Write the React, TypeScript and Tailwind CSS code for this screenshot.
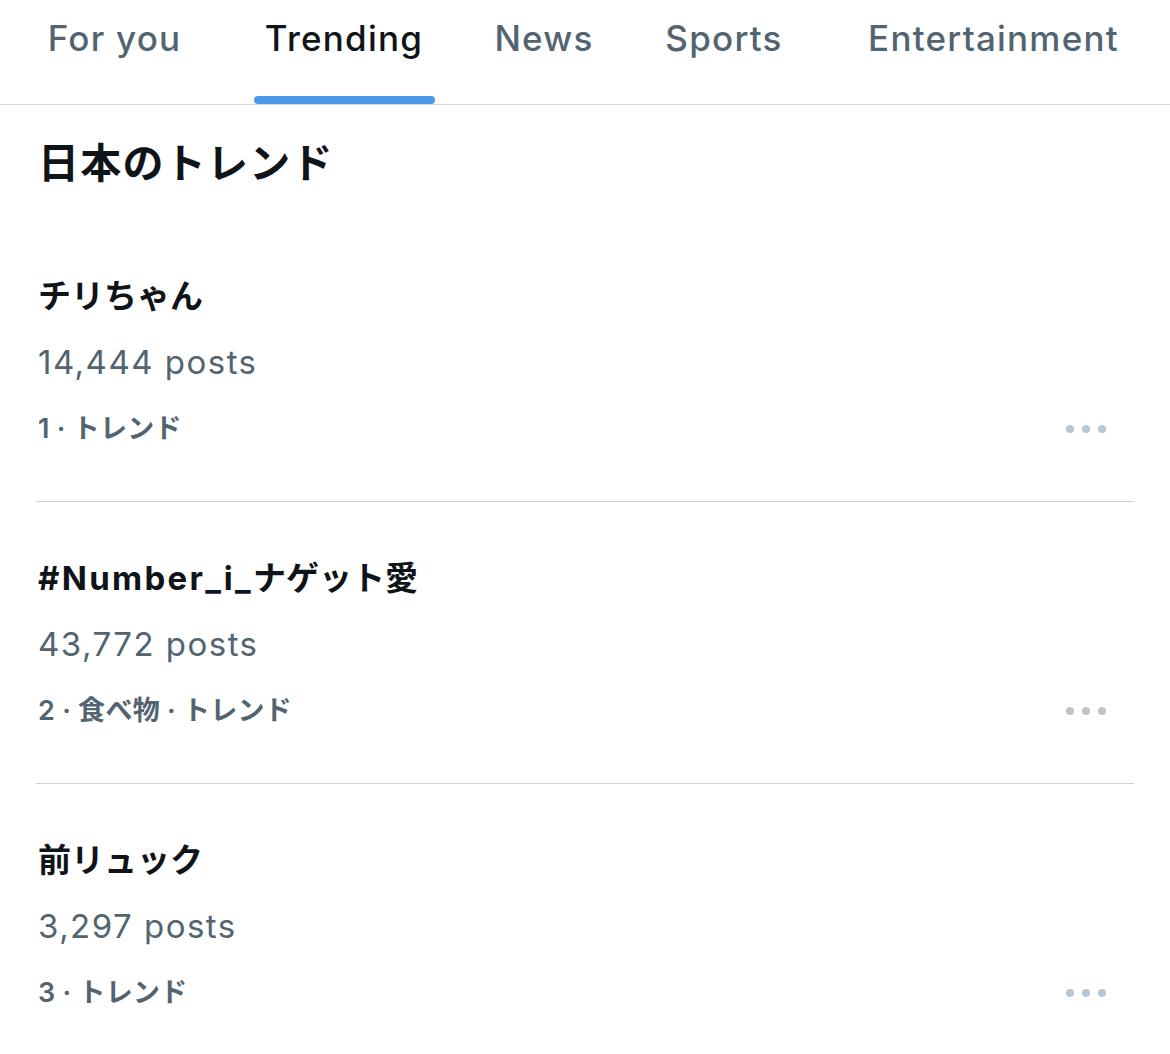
const tabs = [
  { label: 'For you', width: 'w-[229px]' },
  { label: 'Trending', width: 'w-[230px]', active: true },
  { label: 'News', width: 'w-[170px]' },
  { label: 'Sports', width: 'w-[190px]' },
  { label: 'Entertainment', width: 'w-[349px]' },
]

const trends = [
  { title: 'チリちゃん', posts: '14,444 posts', meta: '1 · トレンド' },
  { title: '#Number_i_ナゲット愛', posts: '43,772 posts', meta: '2 · 食べ物 · トレンド' },
  { title: '前リュック', posts: '3,297 posts', meta: '3 · トレンド' },
]

function MoreDots() {
  return (
    <div className="flex items-center gap-[8px] mr-[28px]">
      <span className="w-[8px] h-[8px] rounded-full bg-[#b9c7d3]" />
      <span className="w-[8px] h-[8px] rounded-full bg-[#b9c7d3]" />
      <span className="w-[8px] h-[8px] rounded-full bg-[#b9c7d3]" />
    </div>
  )
}

// latin runs get a little extra tracking, CJK keeps its natural width
function Title({ text }: { text: string }) {
  const parts = text.split(/([A-Za-z0-9#_]+)/).filter(Boolean)
  return (
    <p className="text-[33px] leading-[40px] font-bold text-[#0f1419]">
      {parts.map((p, i) =>
        /[A-Za-z0-9#_]/.test(p) ? (
          <span key={i} className="tracking-[0.07em]">{p}</span>
        ) : (
          <span key={i}>{p}</span>
        )
      )}
    </p>
  )
}

export default function App() {
  return (
    <div
      className="w-[1170px] h-[1054px] bg-white overflow-hidden"
      style={{ fontFamily: 'Inter, "Noto Sans CJK JP", sans-serif' }}
    >
      {/* Tabs */}
      <div className="flex h-[105px] border-b border-[#cfd9de]">
        {tabs.map((tab) => (
          <div key={tab.label} className={`${tab.width} flex flex-col items-center justify-between`}>
            <span
              className={`pt-[16px] text-[35px] leading-[44px] font-medium tracking-[0.035em] ${
                tab.active ? 'text-[#0f1419]' : 'text-[#536471]'
              }`}
            >
              {tab.label}
            </span>
            {tab.active ? (
              <span className="w-[181px] h-[8px] rounded-full bg-[#4a99e9]" />
            ) : (
              <span className="h-[8px]" />
            )}
          </div>
        ))}
      </div>

      {/* Heading */}
      <h1 className="mt-[34px] mb-[33px] ml-[38px] text-[41px] leading-[48px] font-bold tracking-[0.03em] text-[#0f1419]">
        日本のトレンド
      </h1>

      {/* Trend list */}
      <div className="mx-[36px]">
        {trends.map((t) => (
          <div key={t.title} className="pt-[56px] pb-[55px] pl-[2px] border-b border-[#cfcfcf]">
            <Title text={t.title} />
            <p className="mt-[26px] text-[33px] leading-[40px] tracking-[0.045em] text-[#536471]">{t.posts}</p>
            <div className="mt-[30px] flex items-center justify-between">
              <span className="text-[27px] leading-[34px] font-semibold tracking-[0.01em] text-[#536471]">
                {t.meta}
              </span>
              <MoreDots />
            </div>
          </div>
        ))}
      </div>
    </div>
  )
}
